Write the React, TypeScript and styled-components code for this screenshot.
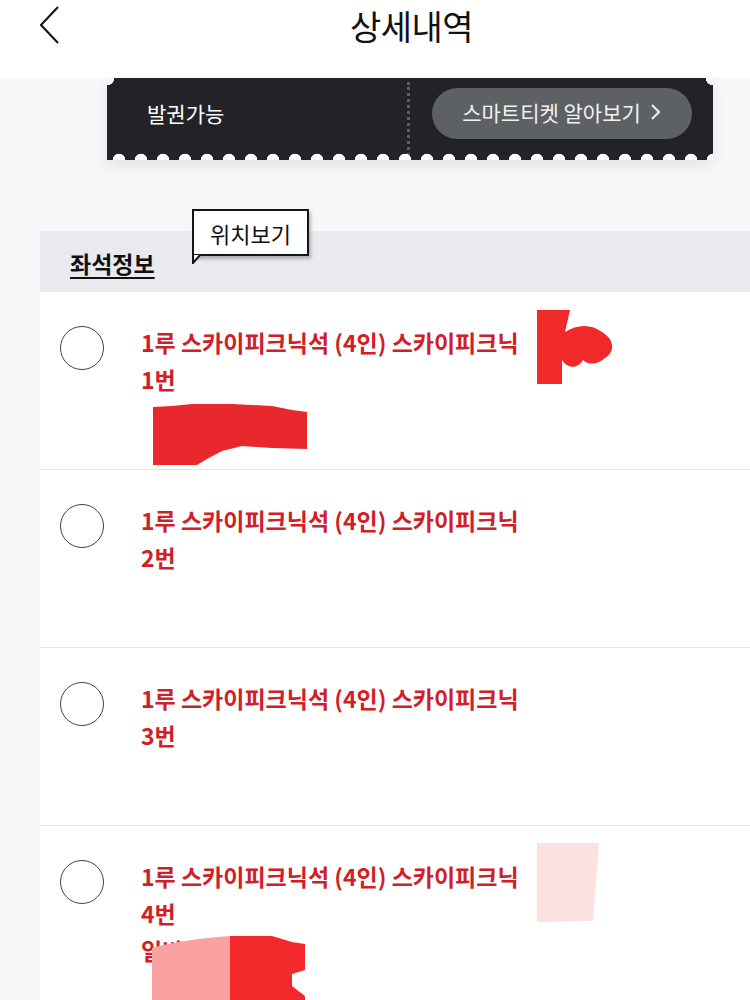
import React from "react";
import styled, { createGlobalStyle } from "styled-components";

const Global = createGlobalStyle`
  html, body { margin: 0; padding: 0; }
  body {
    background: #f6f7f9;
    font-family: "Noto Sans CJK KR", "Noto Sans", sans-serif;
    width: 750px;
    height: 1000px;
    overflow: hidden;
  }
`;

const PAGE_BG = "#f6f7f9";

const Header = styled.header`
  height: 78px;
  background: #ffffff;
  display: flex;
  align-items: flex-start;
  padding-left: 40px;
  box-sizing: border-box;
`;

const Back = styled.svg`
  width: 20px;
  height: 44px;
  margin-top: 4px;
  flex: none;
`;

const Title = styled.h1`
  margin: 0 0 0 290px;
  font-size: 34px;
  font-weight: 400;
  line-height: 52px;
  color: #111;
  letter-spacing: -0.5px;
`;

const Ticket = styled.section`
  position: relative;
  margin-left: 107px;
  width: 606px;
  height: 82px;
  background: #232327;
  display: flex;
  align-items: center;
  padding-bottom: 12px;
  box-sizing: border-box;
  box-shadow: 0 6px 14px rgba(0, 0, 0, 0.08);
  &::before {
    content: "";
    position: absolute;
    inset: 0;
    background:
      radial-gradient(circle at 0 0, ${PAGE_BG} 7px, transparent 7.5px),
      radial-gradient(circle at 100% 0, ${PAGE_BG} 7px, transparent 7.5px);
    pointer-events: none;
  }
  &::after {
    content: "";
    position: absolute;
    left: 0;
    right: 0;
    bottom: 0;
    height: 7px;
    background: radial-gradient(circle at 50% 100%, #ffffff 6px, transparent 6.6px) repeat-x;
    background-size: 22px 7px;
    background-position: 1px 0;
  }
`;

const Status = styled.div`
  width: 300px;
  padding-left: 40px;
  box-sizing: border-box;
  color: #fff;
  font-size: 21px;
  flex: none;
`;

const Divider = styled.div`
  align-self: stretch;
  margin: 4px 0 -8px;
  border-left: 3px dotted #5f5f63;
  flex: none;
`;

const SmartButton = styled.button`
  margin-left: 22px;
  width: 260px;
  height: 51px;
  border: none;
  border-radius: 26px;
  background: #5e6164;
  color: #f2f2f2;
  font-family: inherit;
  font-size: 21px;
  display: flex;
  align-items: center;
  justify-content: center;
  gap: 9px;
  padding: 0 0 2px;
`;

const Card = styled.section`
  margin: 71px 0 0 40px;
  background: #ffffff;
`;

const CardHead = styled.div`
  position: relative;
  height: 61px;
  background: #e9eaee;
  padding-left: 30px;
  display: flex;
  align-items: center;
`;

const HeadTitle = styled.h2`
  margin: 0;
  font-size: 23px;
  font-weight: 700;
  color: #111;
  text-decoration: underline;
  text-underline-offset: 4px;
  text-decoration-thickness: 2px;
  line-height: 30px;
  padding-top: 2px;
`;

const Tooltip = styled.div`
  position: absolute;
  left: 152px;
  top: -22px;
  width: 117px;
  height: 47px;
  box-sizing: border-box;
  border: 2px solid #151515;
  background: #fff;
  box-shadow: 2px 3px 3px rgba(0, 0, 0, 0.25);
  display: flex;
  align-items: center;
  justify-content: center;
  font-size: 22px;
  color: #111;
`;

const Tail = styled.svg`
  position: absolute;
  left: -2px;
  bottom: -10px;
  width: 12px;
  height: 10px;
`;

const Row = styled.div`
  position: relative;
  height: 178px;
  box-sizing: border-box;
  border-bottom: 1px solid #e3e4e8;
  padding: 34px 0 0 20px;
  display: flex;
  align-items: flex-start;
  gap: 37px;
  overflow: hidden;
`;

const Radio = styled.span`
  width: 44px;
  height: 44px;
  border-radius: 50%;
  border: 1.5px solid #444;
  box-sizing: border-box;
  flex: none;
`;

const SeatText = styled.div`
  color: #cf2028;
  font-size: 23px;
  font-weight: 700;
  line-height: 37px;
  margin-top: -2px;
`;

const Line = styled.div`
  white-space: nowrap;
`;

const Redaction = styled.svg`
  position: absolute;
  pointer-events: none;
`;

type Seat = { no: number; extra?: string };

const seats: Seat[] = [{ no: 1 }, { no: 2 }, { no: 3 }, { no: 4, extra: "일반" }];

export default function App() {
  return (
    <>
      <Global />
      <Header>
        <Back viewBox="0 0 20 44">
          <polyline points="18,3 1,21 18,39" fill="none" stroke="#111" strokeWidth="2" />
        </Back>
        <Title>상세내역</Title>
      </Header>

      <Ticket>
        <Status>발권가능</Status>
        <Divider />
        <SmartButton>
          스마트티켓 알아보기
          <svg width="12" height="20" viewBox="0 0 12 20">
            <polyline points="2,3 9,10 2,17" fill="none" stroke="#f2f2f2" strokeWidth="2" />
          </svg>
        </SmartButton>
      </Ticket>

      <Card>
        <CardHead>
          <HeadTitle>좌석정보</HeadTitle>
          <Tooltip>
            위치보기
            <Tail viewBox="0 0 12 10">
              <path d="M1 0 L1 9 L9 0 Z" fill="#fff" stroke="#151515" strokeWidth="2" />
              <rect x="2" y="-2" width="7" height="2" fill="#fff" />
            </Tail>
          </Tooltip>
        </CardHead>
        {seats.map((s) => (
          <Row key={s.no}>
            <Radio />
            <SeatText>
              <Line>1루 스카이피크닉석 (4인) 스카이피크닉</Line>
              <Line>{s.no}번</Line>
              {s.extra && <Line>{s.extra}</Line>}
            </SeatText>
            {s.no === 1 && (
              <>
                <Redaction style={{ left: 112, top: 112, width: 156, height: 62 }} viewBox="0 0 156 62">
                  <path
                    d="M1 3 L20 2 L40 0 L80 0 L120 2 L140 6 L155 8 L155 45 L120 44 L90 42 L70 47 L55 55 L45 61 L1 61 Z"
                    fill="#e8282d"
                  />
                </Redaction>
                <Redaction style={{ left: 497, top: 18, width: 80, height: 76 }} viewBox="0 0 80 76">
                  <path
                    d="M0 0 L33 0 L28 22 C40 14 55 14 65 22 C78 30 78 42 68 48 C62 54 52 56 46 50 C40 60 30 58 25 50 L25 74 L0 74 Z"
                    fill="#f02a2a"
                  />
                </Redaction>
              </>
            )}
            {s.no === 4 && (
              <>
                <Redaction style={{ left: 497, top: 17, width: 62, height: 80 }} viewBox="0 0 62 80">
                  <path d="M0 0 L62 0 L56 78 L0 79 Z" fill="#fde1e1" />
                </Redaction>
                <Redaction style={{ left: 112, top: 108, width: 154, height: 70 }} viewBox="0 0 154 70">
                  <path d="M0 14 C20 8 50 4 78 2 L78 70 L0 70 Z" fill="#fba1a1" />
                  <path d="M78 2 L120 2 L140 8 L153 10 L153 36 L140 40 L140 52 L153 62 L153 70 L78 70 Z" fill="#f3292b" />
                </Redaction>
              </>
            )}
          </Row>
        ))}
      </Card>
    </>
  );
}
